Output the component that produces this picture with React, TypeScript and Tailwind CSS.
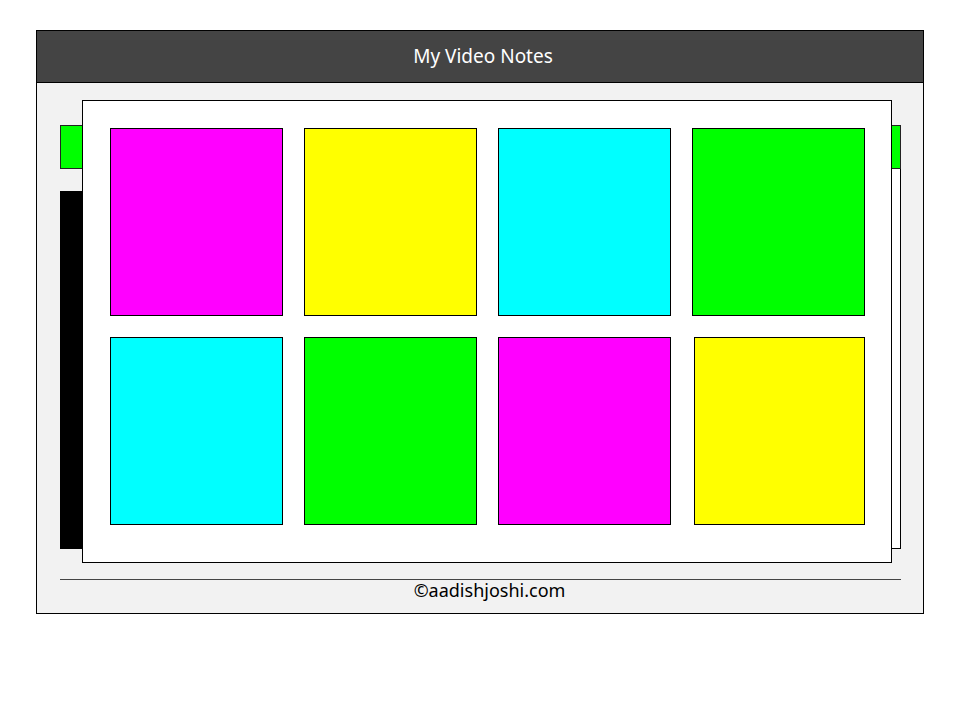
import React from 'react';

const tiles = [
  'bg-[#ff00ff]',
  'bg-[#ffff00]',
  'bg-[#00ffff]',
  'bg-[#00ff00]',
  'bg-[#00ffff]',
  'bg-[#00ff00]',
  'bg-[#ff00ff]',
  'bg-[#ffff00]',
];

export default function App() {
  return (
    <div className="w-[960px] h-[720px] bg-white pt-[30px] pl-[36px] font-['Comic_Sans_MS','Noto_Sans',sans-serif]">
      <div className="relative w-[888px] h-[584px] border border-black bg-[#f2f2f2]">
        <div className="h-[52px] bg-[#444444] border-b border-black flex items-center justify-center pl-[6px] text-white text-[19px]">
          My Video Notes
        </div>

        <div className="px-[23px] pt-[42px]">
          <div className="h-[44px] w-[841px] bg-[#00ff00] border border-[#222]" />
          <div className="flex h-[380px] w-[841px]">
            <div className="w-[60px] h-[358px] mt-[22px] bg-black" />
            <div className="flex-1 bg-white border-r border-b border-black" />
          </div>
          <div className="mt-[30px] h-px w-[841px] bg-[#444]" />
          <div className="text-center text-black text-[18px] leading-[20px] pl-[19px]">©aadishjoshi.com</div>
        </div>

        {/* video grid modal */}
        <div className="absolute left-[45px] top-[69px] w-[810px] h-[463px] border border-black bg-white pl-[27px] pt-[27px]">
          <div className="grid grid-cols-[repeat(4,173px)] gap-x-[21px] gap-y-[21px]">
            {tiles.map((c, i) => (
              <div key={i} className={`h-[188px] border border-black ${c} ${i === 7 ? 'ml-[2px]' : ''}`} />
            ))}
          </div>
        </div>
      </div>
    </div>
  );
}
